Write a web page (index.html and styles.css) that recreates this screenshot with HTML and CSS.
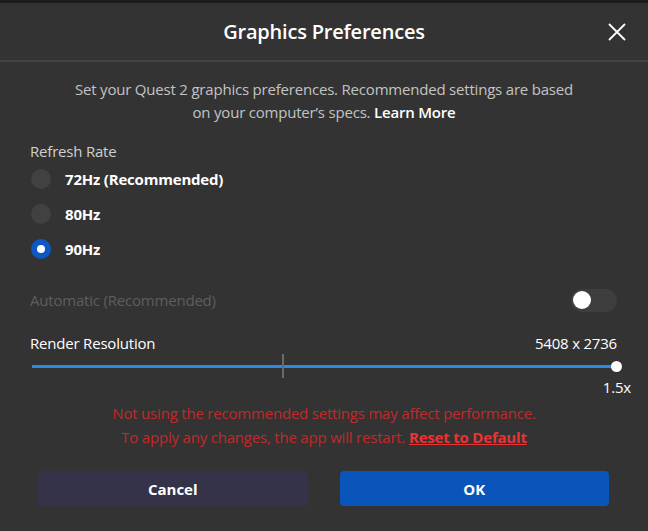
FILE: index.html
```html
<!DOCTYPE html>
<html>
<head>
<meta charset="utf-8">
<link rel="stylesheet" href="styles.css">
</head>
<body>
<div class="dialog">
  <header class="header">
    <h1 class="title">Graphics Preferences</h1>
    <button class="close" aria-label="Close">
      <svg width="20" height="20" viewBox="0 0 20 20"><path d="M2 2 L18 18 M18 2 L2 18" stroke="#fff" stroke-width="1.8" fill="none"/></svg>
    </button>
  </header>
  <p class="desc">Set your Quest 2 graphics preferences. Recommended settings are based<br>on your computer’s specs. <span class="learn">Learn More</span></p>
  <div class="section-label">Refresh Rate</div>
  <div class="radios">
    <div class="radio"><span class="dot"></span><span class="rlabel">72Hz (Recommended)</span></div>
    <div class="radio"><span class="dot"></span><span class="rlabel">80Hz</span></div>
    <div class="radio"><span class="dot checked"></span><span class="rlabel">90Hz</span></div>
  </div>
  <div class="auto-row">
    <span class="auto-label">Automatic (Recommended)</span>
    <span class="toggle"><span class="knob"></span></span>
  </div>
  <div class="res-row">
    <span>Render Resolution</span>
    <span>5408 x 2736</span>
  </div>
  <div class="slider">
    <div class="track"></div>
    <div class="tick"></div>
    <div class="thumb"></div>
  </div>
  <div class="scale">1.5x</div>
  <p class="warn">Not using the recommended settings may affect performance.<br>To apply any changes, the app will restart. <span class="reset">Reset to Default</span></p>
  <div class="buttons">
    <button class="btn cancel">Cancel</button>
    <button class="btn ok">OK</button>
  </div>
</div>
</body>
</html>
```
FILE: styles.css
```css
* { box-sizing: border-box; }
html, body { margin: 0; padding: 0; background: #333333; }
body {
  font-family: "Open Sans", "Noto Sans", sans-serif;
  color: #fff;
  width: 648px;
  height: 531px;
  overflow: hidden;
}
.dialog {
  border-top: 3px solid #1c1c1c;
  height: 531px;
  display: flex;
  flex-direction: column;
}
.header {
  height: 59px;
  border-bottom: 2px solid #434343;
  display: flex;
  align-items: center;
  justify-content: center;
  position: relative;
}
.title {
  margin: 0;
  font-size: 20px;
  font-weight: 600;
  letter-spacing: -0.2px;
}
.close {
  position: absolute;
  right: 21px;
  top: 19px;
  background: none;
  border: 0;
  padding: 0;
  width: 20px;
  height: 20px;
}
.desc {
  margin: 16px 0 0;
  text-align: center;
  font-size: 15px;
  line-height: 23px;
  color: #c3c3c3;
  letter-spacing: -0.2px;
}
.learn { color: #fff; font-weight: 600; }
.section-label {
  margin: 17px 0 0 30px;
  font-size: 15px;
  color: #cfcfcf;
  line-height: 20px;
  letter-spacing: -0.2px;
}
.radios {
  margin: 7px 0 0 31px;
  display: flex;
  flex-direction: column;
  gap: 14px;
}
.radio {
  display: flex;
  align-items: center;
  height: 21px;
}
.dot {
  width: 20px;
  height: 20px;
  border-radius: 50%;
  background: #414141;
  margin-right: 14px;
  display: flex;
  align-items: center;
  justify-content: center;
}
.dot.checked { background: #0c58c4; }
.dot.checked::after {
  content: "";
  width: 8px;
  height: 8px;
  border-radius: 50%;
  background: #fff;
}
.rlabel {
  font-size: 15px;
  font-weight: 700;
  letter-spacing: -0.2px;
}
.auto-row {
  margin: 29px 31px 0 30px;
  display: flex;
  justify-content: space-between;
  align-items: center;
  height: 24px;
}
.auto-label {
  font-size: 15px;
  color: #5e5e5e;
  letter-spacing: -0.2px;
}
.toggle {
  width: 46px;
  height: 23px;
  border-radius: 12px;
  background: #3e3e3e;
  display: flex;
  align-items: center;
  padding-left: 2px;
}
.knob {
  width: 18px;
  height: 18px;
  border-radius: 50%;
  background: #fff;
}
.res-row {
  margin: 21px 31px 0 30px;
  display: flex;
  justify-content: space-between;
  font-size: 15px;
  line-height: 20px;
  letter-spacing: -0.2px;
}
.slider {
  position: relative;
  margin: 1px 25px 0 32px;
  height: 24px;
}
.track {
  position: absolute;
  left: 0; right: 6px;
  top: 11px;
  height: 3px;
  background: #2d8ae2;
}
.tick {
  position: absolute;
  left: 250px;
  top: 0;
  width: 2px;
  height: 24px;
  background: #6a6a6a;
}
.thumb {
  position: absolute;
  right: 1px;
  top: 7px;
  width: 11px;
  height: 11px;
  border-radius: 50%;
  background: #fff;
}
.scale {
  margin: 0 17px 0 0;
  text-align: right;
  font-size: 15px;
  line-height: 18px;
  letter-spacing: -0.2px;
}
.warn {
  margin: 5px 0 0;
  text-align: center;
  font-size: 15px;
  line-height: 24px;
  color: #c02a2a;
  letter-spacing: -0.2px;
}
.reset {
  color: #e83434;
  font-weight: 700;
  text-decoration: underline;
}
.buttons {
  margin: 22px 39px 0 38px;
  display: flex;
  gap: 32px;
}
.btn {
  flex: 1;
  height: 35px;
  border: 0;
  border-radius: 4px;
  color: #fff;
  font-family: inherit;
  font-size: 15px;
  font-weight: 700;
}
.cancel { background: #34334a; }
.ok { background: #0a55b9; }
```
